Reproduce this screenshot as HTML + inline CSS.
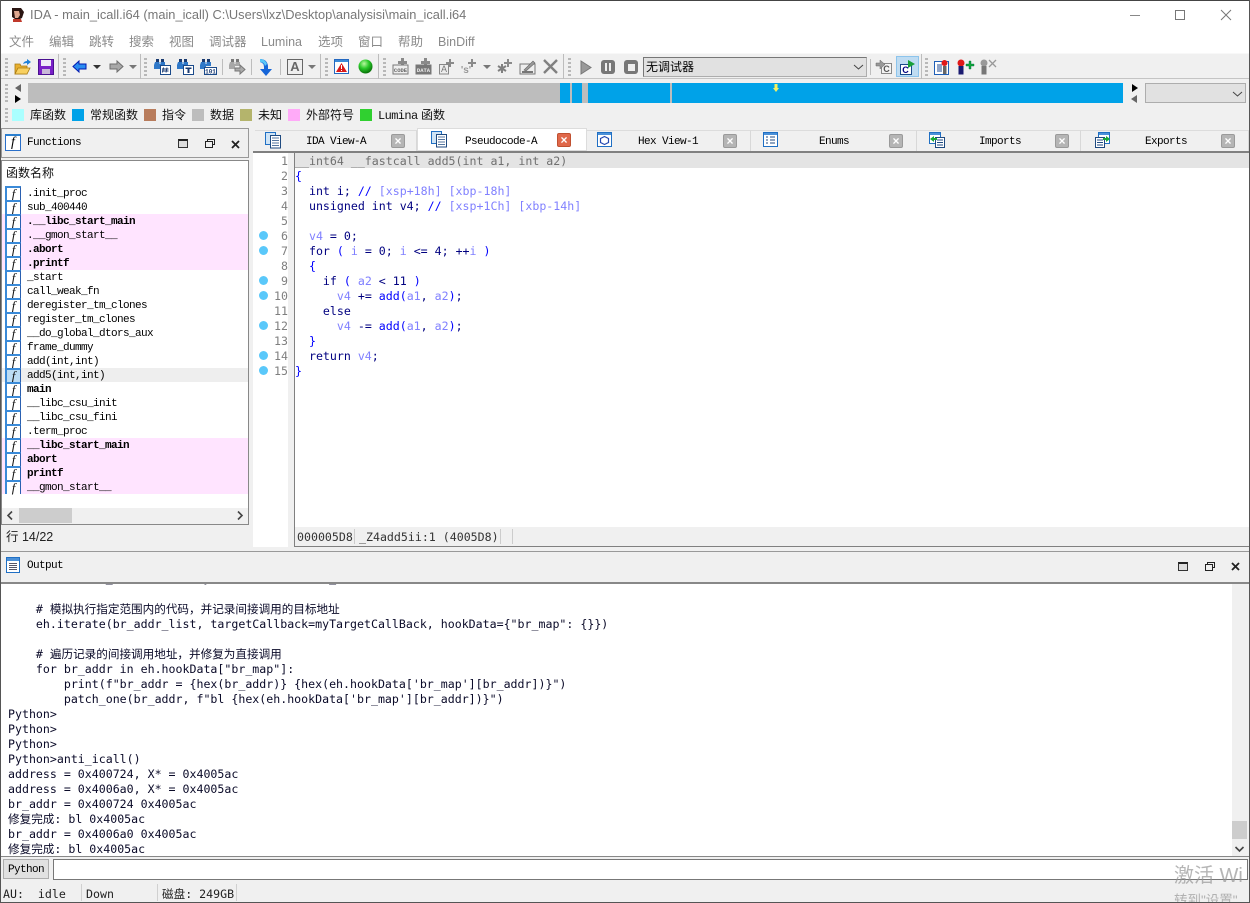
<!DOCTYPE html>
<html><head><meta charset="utf-8"><style>
html,body{margin:0;padding:0;width:1250px;height:903px;overflow:hidden;background:#f0f0f0}
*{box-sizing:border-box}
.a{position:absolute}
body{font-family:"Liberation Sans","Noto Sans CJK SC",sans-serif;font-size:12px;color:#000}
.t{position:absolute;white-space:pre;line-height:14px}
.m{color:#8a8a8a;font-size:12.500px;top:35px}
.s{font-family:"Liberation Mono","Noto Sans CJK SC",monospace;font-size:11px;letter-spacing:-.6px}
.fn{position:absolute;left:27px;font-family:"Liberation Mono",monospace;font-size:11px;letter-spacing:-.6px;white-space:pre;line-height:14px;height:14px}
.b{font-weight:bold}
.fi{position:absolute;left:5px;width:16px;height:14px;background:#fff;border-left:2px solid #3a8ad8;border-right:1px solid #2a5fb0;border-top:2px solid #3a8ad8;font:italic 13px/12px "Liberation Serif",serif;text-align:center;color:#111}
.ln{position:absolute;left:253px;width:35px;text-align:right;font-family:"DejaVu Sans Mono",monospace;font-size:11.6px;line-height:15px;color:#7f7f7f}
.dot{position:absolute;left:259px;width:9px;height:9px;border-radius:50%;background:#5ac8fa}
.c{position:absolute;left:295px;font-family:"DejaVu Sans Mono",monospace;font-size:11.6px;line-height:15px;white-space:pre;color:#000080}
.c i{font-style:normal;color:#8080ff}.c u{text-decoration:none;color:#0000ff}
.o{position:absolute;left:8px;font-family:"DejaVu Sans Mono","Noto Sans CJK SC",monospace;font-size:11.6px;line-height:15px;white-space:pre;color:#0a0a28}
.st{position:absolute;top:887px;font-family:"DejaVu Sans Mono","Noto Sans CJK SC",monospace;font-size:11.6px;line-height:14px;white-space:pre;color:#222}
.tab{position:absolute;top:130px;height:21px;background:#f0f0f0;border-right:1px solid #d8d8d8;border-top:1px solid #dcdcdc}
.tl{position:absolute;top:135px;font-family:"Liberation Mono",monospace;font-size:11px;letter-spacing:-.6px;line-height:14px;white-space:pre}
.x{position:absolute;top:134px;width:14px;height:14px;background:#b5b5b5;border:1px solid #9a9a9a;border-radius:2px;color:#fff;font:bold 12px/12px "Liberation Sans",sans-serif;text-align:center}
.grip{position:absolute;width:3px;top:58px;height:18px;background:repeating-linear-gradient(#b8b8b8 0 2px,transparent 2px 4px)}
.sep{position:absolute;top:54px;width:1px;height:25px;background:#bdbdbd}
.lg{position:absolute;top:109px;width:12px;height:12px}
.lt{position:absolute;top:108px;font-size:12px;line-height:14px;white-space:pre;color:#111}
svg{position:absolute;overflow:visible}
</style></head><body>

<!-- title & menu -->
<div class="a" style="left:0;top:0;width:1250px;height:53px;background:#fff"></div>
<div class="a" style="left:0;top:0;width:1250px;height:1px;background:#444"></div>
<div class="a" style="left:0;top:0;width:1px;height:903px;background:#555;z-index:9"></div>
<div class="a" style="left:1249px;top:0;width:1px;height:903px;background:#555;z-index:9"></div>
<div class="a" style="left:0;top:902px;width:1250px;height:1px;background:#555;z-index:9"></div>
<svg style="left:9px;top:7px" width="17" height="16" viewBox="0 0 17 16"><path d="M3 1h9l3 4-2 6-2 1 1 3H5l1-3-3-2z" fill="#2a1512"/><path d="M5 4h5l1 4-2 3H6z" fill="#e0a890"/><path d="M4 12h8l1 3H4z" fill="#c0392b"/></svg>
<div class="t" style="left:30px;top:8px;font-size:12.830px;color:#777">IDA - main_icall.i64 (main_icall) C:\Users\lxz\Desktop\analysisi\main_icall.i64</div>
<div class="a" style="left:1130px;top:15px;width:10px;height:1px;background:#888"></div>
<div class="a" style="left:1175px;top:10px;width:10px;height:10px;border:1px solid #777"></div>
<svg style="left:1221px;top:10px" width="10" height="10"><path d="M0 0L10 10M10 0L0 10" stroke="#777" fill="none"/></svg>
<div class="t m" style="left:9px">文件</div><div class="t m" style="left:49px">编辑</div><div class="t m" style="left:89px">跳转</div><div class="t m" style="left:129px">搜索</div><div class="t m" style="left:169px">视图</div><div class="t m" style="left:209px">调试器</div><div class="t m" style="left:261px">Lumina</div><div class="t m" style="left:318px">选项</div><div class="t m" style="left:358px">窗口</div><div class="t m" style="left:398px">帮助</div><div class="t m" style="left:438px">BinDiff</div>

<!-- toolbar -->
<div class="a" style="left:0;top:53px;width:1250px;height:26px;background:#f0f0f0;border-top:1px solid #f8f8f8;border-bottom:1px solid #c4c4c4"></div>
<div class="grip" style="left:5px"></div><div class="grip" style="left:63px"></div><div class="grip" style="left:144px"></div><div class="grip" style="left:325px"></div><div class="grip" style="left:383px"></div><div class="grip" style="left:568px"></div><div class="grip" style="left:925px"></div>
<div class="sep" style="left:58px"></div><div class="sep" style="left:140px"></div><div class="sep" style="left:320px"></div><div class="sep" style="left:378px"></div><div class="sep" style="left:563px"></div><div class="sep" style="left:921px"></div>
<!-- folder -->
<svg style="left:14px;top:59px" width="17" height="17" viewBox="0 0 17 17"><path d="M1 5h5l1 2h6v8H1z" fill="#e8b030" stroke="#a87a10" stroke-width=".8"/><path d="M1 15l3-6h12l-3 6z" fill="#f8d060" stroke="#a87a10" stroke-width=".8"/><path d="M9 5q1-3 4-3V0l4 3-4 3V4q-2 0-4 1z" fill="#1e80d8"/></svg>
<!-- save -->
<svg style="left:38px;top:59px" width="16" height="16" viewBox="0 0 16 16"><path d="M.5.5h15v15H.5z" fill="#7a1fc8" stroke="#4a1090"/><path d="M3 1h10v6H3z" fill="#f0e8f8"/><path d="M4 10h8v5H4z" fill="#c8b8d8"/></svg>
<!-- arrows -->
<svg style="left:73px;top:60px" width="14" height="13" viewBox="0 0 14 13"><path d="M0 6.500L6 1v3h7v5H6v3z" fill="#2a8cf0" stroke="#0018b0"/></svg>
<svg style="left:93px;top:65px" width="8" height="4"><path d="M0 0h8L4 4z" fill="#333"/></svg>
<svg style="left:109px;top:60px" width="14" height="13" viewBox="0 0 14 13"><path d="M14 6.500L8 1v3H1v5h7v3z" fill="#a8a8a8" stroke="#6e6e6e"/></svg>
<svg style="left:129px;top:65px" width="8" height="4"><path d="M0 0h8L4 4z" fill="#777"/></svg>
<!-- binoculars -->
<svg style="left:154px;top:59px" width="17" height="16" viewBox="0 0 17 16"><path d="M2 0h3v3H2zM7 0h3v3H7z" fill="#1a3a70"/><path d="M1 3h4.500v2h1V3H11v4H6v3H0V6z" fill="#2f78c8"/><rect x="6.500" y="6.500" width="10" height="9" fill="#fff" stroke="#1a4a8a"/><path d="M9.500 8.500l-1 5M13 8.500l-1 5M8 10h6.500M8 12h6.500" stroke="#1a3a70" stroke-width=".9" fill="none"/></svg>
<svg style="left:177px;top:59px" width="17" height="16" viewBox="0 0 17 16"><path d="M2 0h3v3H2zM7 0h3v3H7z" fill="#1a3a70"/><path d="M1 3h4.500v2h1V3H11v4H6v3H0V6z" fill="#2f78c8"/><rect x="6.500" y="6.500" width="10" height="9" fill="#fff" stroke="#1a4a8a"/><path d="M8.500 8.500h6v1.500h-2v4h-2v-4h-2z" fill="#1a3a70"/></svg>
<svg style="left:200px;top:59px" width="17" height="16" viewBox="0 0 17 16"><path d="M2 0h3v3H2zM7 0h3v3H7z" fill="#1a3a70"/><path d="M1 3h4.500v2h1V3H11v4H6v3H0V6z" fill="#2f78c8"/><rect x="4.500" y="8.500" width="12" height="7" fill="#fff" stroke="#1a4a8a"/><text x="10.500" y="14.300" font-size="6" font-weight="bold" text-anchor="middle" fill="#1a3a70" font-family="Liberation Mono">101</text></svg>
<div class="sep" style="left:222px;top:59px;height:16px"></div>
<svg style="left:229px;top:59px" width="17" height="16" viewBox="0 0 17 16"><path d="M2 0h3v3H2zM7 0h3v3H7z" fill="#777"/><path d="M1 3h4.500v2h1V3H11v4H6v3H0V6z" fill="#a8a8a8"/><path d="M6 9h5V6l5 4.500-5 4.500v-3H6z" fill="#aaa" stroke="#777"/></svg>
<div class="sep" style="left:251px;top:59px;height:16px"></div>
<svg style="left:259px;top:59px" width="14" height="17" viewBox="0 0 14 17"><path d="M1 0q7 0 8 7v3h4l-6 7-6-7h4V8Q5 4 1 3z" fill="#1565d8"/><path d="M1 0q5 0 7 5l-2 2Q5 3 1 3z" fill="#58c8f8"/></svg>
<div class="sep" style="left:280px;top:59px;height:16px"></div>
<div class="a" style="left:287px;top:59px;width:16px;height:16px;border:1px solid #666;background:#eee;text-align:center;font:bold 13px/14px 'Liberation Sans',sans-serif;color:#666">A</div>
<svg style="left:308px;top:65px" width="8" height="4"><path d="M0 0h8L4 4z" fill="#777"/></svg>
<!-- warning -->
<svg style="left:334px;top:59px" width="15" height="15" viewBox="0 0 15 15"><rect x=".5" y=".5" width="14" height="14" fill="#fff" stroke="#2468c0"/><rect x="1" y="1" width="13" height="2" fill="#3a8ad8"/><path d="M7.500 4L13 13H2z" fill="#d81818"/><path d="M7 6h1v4H7zM7 11h1v1H7z" fill="#fff"/></svg>
<svg style="left:358px;top:59px" width="15" height="15" viewBox="0 0 15 15"><defs><radialGradient id="g" cx=".4" cy=".3" r=".7"><stop offset="0" stop-color="#b8f8a0"/><stop offset=".5" stop-color="#28c828"/><stop offset="1" stop-color="#087008"/></radialGradient></defs><circle cx="7.500" cy="7.500" r="7" fill="url(#g)"/></svg>
<!-- add items -->
<svg style="left:392px;top:58px" width="17" height="17" viewBox="0 0 17 17"><path d="M9 0h3v3h3v3h-3v3H9V6H6V3h3z" fill="#8a8a8a"/><rect x="1" y="7" width="15" height="9" fill="#eee" stroke="#777"/><text x="8.500" y="14" font-size="5.500" font-weight="bold" text-anchor="middle" fill="#666" font-family="Liberation Mono">CODE</text></svg>
<svg style="left:415px;top:58px" width="17" height="17" viewBox="0 0 17 17"><path d="M9 0h3v3h3v3h-3v3H9V6H6V3h3z" fill="#8a8a8a"/><rect x="1" y="7" width="15" height="9" fill="#777" stroke="#777"/><text x="8.500" y="14" font-size="5.500" font-weight="bold" text-anchor="middle" fill="#eee" font-family="Liberation Mono">DATA</text></svg>
<svg style="left:438px;top:58px" width="17" height="17" viewBox="0 0 17 17"><path d="M11 1h2v3h3v2h-3v3h-2V6H8V4h3z" fill="#8a8a8a"/><rect x="1.500" y="6.500" width="9" height="9.500" fill="#eee" stroke="#888"/><text x="6" y="14" font-size="9" text-anchor="middle" fill="#777" font-family="Liberation Sans">A</text></svg>
<svg style="left:460px;top:58px" width="18" height="17" viewBox="0 0 18 17"><path d="M11 1h2v3h3v2h-3v3h-2V6H8V4h3z" fill="#8a8a8a"/><text x="6" y="15" font-size="10" font-weight="bold" text-anchor="middle" fill="#999" font-family="Liberation Sans">'s'</text></svg>
<svg style="left:483px;top:65px" width="8" height="4"><path d="M0 0h8L4 4z" fill="#777"/></svg>
<svg style="left:496px;top:58px" width="17" height="17" viewBox="0 0 17 17"><path d="M11 1h2v3h3v2h-3v3h-2V6H8V4h3z" fill="#8a8a8a"/><path d="M6 6v9M2 8l8 5M10 8l-8 5" stroke="#808080" stroke-width="2" fill="none"/></svg>
<svg style="left:519px;top:58px" width="17" height="17" viewBox="0 0 17 17"><rect x="1" y="6" width="15" height="10" fill="#eee" stroke="#777"/><path d="M3 13h11v2H3z" fill="#777"/><path d="M5 12l9-9 2 2-9 8z" fill="#999" stroke="#666" stroke-width=".6"/></svg>
<svg style="left:543px;top:59px" width="15" height="15"><path d="M1 1l13 13M14 1L1 14" stroke="#808080" stroke-width="2.400" fill="none"/></svg>
<svg style="left:580px;top:60px" width="12" height="15"><path d="M1 1l10 6.500L1 14z" fill="#999" stroke="#777"/></svg>
<div class="a" style="left:601px;top:60px;width:14px;height:14px;background:#777;border-radius:3px"></div><div class="a" style="left:605px;top:63px;width:2px;height:8px;background:#eee"></div><div class="a" style="left:609px;top:63px;width:2px;height:8px;background:#eee"></div>
<div class="a" style="left:624px;top:60px;width:14px;height:14px;background:#777;border-radius:3px"></div><div class="a" style="left:628px;top:64px;width:7px;height:7px;background:#eee"></div>
<div class="a" style="left:643px;top:57px;width:224px;height:20px;background:#e1e1e1;border:1px solid #adadad;border-left-color:#777;border-top-color:#777;font-size:12px;line-height:18px;padding-left:2px">无调试器</div>
<svg style="left:854px;top:65px" width="9" height="5"><path d="M0 0l4.500 4L9 0" stroke="#444" fill="none"/></svg>
<div class="sep" style="left:870px;top:59px;height:16px"></div>
<svg style="left:876px;top:59px" width="16" height="16" viewBox="0 0 16 16"><rect x="5.500" y="4.500" width="10" height="10" fill="#f4f4f4" stroke="#888"/><path d="M0 4h4V1l5 4.500L4 10V7H0z" fill="#999" stroke="#666" stroke-width=".5"/><text x="10.500" y="13" font-size="9" font-weight="bold" text-anchor="middle" fill="#555" font-family="Liberation Sans">C</text></svg>
<div class="a" style="left:896px;top:56px;width:23px;height:21px;background:#bfdcf2;border:1px solid #8cc4ec"></div>
<svg style="left:900px;top:59px" width="16" height="17" viewBox="0 0 16 17"><rect x=".5" y="5.500" width="11" height="10" fill="#fff" stroke="#1a4a8a"/><text x="5.500" y="14" font-size="9" font-weight="bold" text-anchor="middle" fill="#000080" font-family="Liberation Sans">C</text><path d="M8 1l7 4-7 4z" fill="#18a038"/></svg>
<svg style="left:934px;top:59px" width="17" height="16" viewBox="0 0 17 16"><rect x=".5" y="2.500" width="14" height="13" fill="#fff" stroke="#1f5fb8"/><path d="M3 6h5M3 8h5M3 10h5M3 12h5" stroke="#1f4a90"/><circle cx="10.500" cy="4" r="3" fill="#e01818"/><rect x="9" y="7" width="3.500" height="8" fill="#666"/></svg>
<svg style="left:957px;top:59px" width="17" height="16" viewBox="0 0 17 16"><circle cx="4" cy="4" r="3.500" fill="#e01818"/><rect x="1.500" y="7" width="5" height="8.500" fill="#1a1a70"/><path d="M9 5h3V2h2v3h3v2h-3v3h-2V7H9z" fill="#10a838" stroke="#064" stroke-width=".4"/></svg>
<svg style="left:980px;top:59px" width="17" height="16" viewBox="0 0 17 16"><circle cx="4" cy="4" r="3.500" fill="#999"/><rect x="1.500" y="7" width="5" height="8.500" fill="#777"/><path d="M9 1l7 7M16 1L9 8" stroke="#999" stroke-width="1.300"/></svg>

<!-- nav bar -->
<div class="grip" style="left:5px;top:84px;height:20px"></div>
<svg style="left:15px;top:84px" width="6" height="8"><path d="M6 0v8L0 4z" fill="#666"/></svg>
<svg style="left:15px;top:95px" width="6" height="8"><path d="M0 0v8l6-4z" fill="#000"/></svg>
<div class="a" style="left:28px;top:83px;width:1095px;height:20px;background:#bdbdbd"></div>
<div class="a" style="left:560px;top:83px;width:10px;height:20px;background:#00a2e8"></div>
<div class="a" style="left:572px;top:83px;width:10px;height:20px;background:#00a2e8"></div>
<div class="a" style="left:588px;top:83px;width:82px;height:20px;background:#00a2e8"></div>
<div class="a" style="left:672px;top:83px;width:451px;height:20px;background:#00a2e8"></div>
<svg style="left:773px;top:84px" width="6" height="8"><path d="M1.500 0h3v4H6L3 8 0 4h1.500z" fill="#f4f060"/></svg>
<svg style="left:1132px;top:84px" width="6" height="8"><path d="M0 0v8l6-4z" fill="#000"/></svg>
<svg style="left:1131px;top:95px" width="6" height="8"><path d="M6 0v8L0 4z" fill="#666"/></svg>
<div class="a" style="left:1145px;top:83px;width:101px;height:20px;background:#e1e1e1;border:1px solid #adadad"></div>
<svg style="left:1233px;top:92px" width="9" height="5"><path d="M0 0l4.500 4L9 0" stroke="#444" fill="none"/></svg>

<!-- legend -->
<div class="grip" style="left:5px;top:108px;height:14px"></div>
<div class="lg" style="left:12px;background:#aaffff"></div><div class="lt" style="left:30px">库函数</div>
<div class="lg" style="left:72px;background:#00a2e8"></div><div class="lt" style="left:90px">常规函数</div>
<div class="lg" style="left:144px;background:#b87c5c"></div><div class="lt" style="left:162px">指令</div>
<div class="lg" style="left:192px;background:#bdbdbd"></div><div class="lt" style="left:210px">数据</div>
<div class="lg" style="left:240px;background:#b4b46c"></div><div class="lt" style="left:258px">未知</div>
<div class="lg" style="left:288px;background:#ffaaf8"></div><div class="lt" style="left:306px">外部符号</div>
<div class="lg" style="left:360px;background:#30d030"></div><div class="lt s" style="left:378px;top:109px">Lumina</div><div class="lt" style="left:421px">函数</div>

<!-- functions panel -->
<div class="a" style="left:1px;top:128px;width:248px;height:30px;background:#f0f0f0;border:1px solid #999"></div>
<div class="a" style="left:5px;top:134px;width:16px;height:17px;background:#fff;border:1px solid #2a6fc9;border-top:2px solid #2a7fd0;font:italic 14px/14px 'Liberation Serif',serif;text-align:center">f</div>
<div class="t s" style="left:27px;top:136px">Functions</div>
<div class="a" style="left:178px;top:139px;width:10px;height:9px;border:1px solid #333;border-top:2px solid #222;background:#ddd"></div>
<svg style="left:205px;top:139px" width="10" height="9"><path d="M2.500 2.500V.5h7v5H7.500M.5 2.500h7v6h-7z" fill="none" stroke="#222"/></svg>
<svg style="left:231px;top:140px" width="9" height="9"><path d="M1 1l7 7M8 1L1 8" stroke="#222" stroke-width="1.800"/></svg>
<div class="a" style="left:1px;top:160px;width:248px;height:365px;background:#fff;border:1px solid #888;border-top-color:#888"></div>
<div class="t" style="left:6px;top:166px;font-size:12px;color:#111">函数名称</div>
<div class="a" style="left:2px;top:214px;width:246px;height:56px;background:#ffe4ff"></div>
<div class="a" style="left:2px;top:368px;width:246px;height:14px;background:#eeeeee"></div>
<div class="a" style="left:2px;top:438px;width:246px;height:56px;background:#ffe4ff"></div>

<div class="fi" style="top:186px">f</div><div class="fn" style="top:187px">.init_proc</div>
<div class="fi" style="top:200px">f</div><div class="fn" style="top:201px">sub_400440</div>
<div class="fi" style="top:214px">f</div><div class="fn b" style="top:215px">.__libc_start_main</div>
<div class="fi" style="top:228px">f</div><div class="fn" style="top:229px">.__gmon_start__</div>
<div class="fi" style="top:242px">f</div><div class="fn b" style="top:243px">.abort</div>
<div class="fi" style="top:256px">f</div><div class="fn b" style="top:257px">.printf</div>
<div class="fi" style="top:270px">f</div><div class="fn" style="top:271px">_start</div>
<div class="fi" style="top:284px">f</div><div class="fn" style="top:285px">call_weak_fn</div>
<div class="fi" style="top:298px">f</div><div class="fn" style="top:299px">deregister_tm_clones</div>
<div class="fi" style="top:312px">f</div><div class="fn" style="top:313px">register_tm_clones</div>
<div class="fi" style="top:326px">f</div><div class="fn" style="top:327px">__do_global_dtors_aux</div>
<div class="fi" style="top:340px">f</div><div class="fn" style="top:341px">frame_dummy</div>
<div class="fi" style="top:354px">f</div><div class="fn" style="top:355px">add(int,int)</div>
<div class="fi" style="top:368px;background:#bcdcf4">f</div><div class="fn" style="top:369px">add5(int,int)</div>
<div class="fi" style="top:382px">f</div><div class="fn b" style="top:383px">main</div>
<div class="fi" style="top:396px">f</div><div class="fn" style="top:397px">__libc_csu_init</div>
<div class="fi" style="top:410px">f</div><div class="fn" style="top:411px">__libc_csu_fini</div>
<div class="fi" style="top:424px">f</div><div class="fn" style="top:425px">.term_proc</div>
<div class="fi" style="top:438px">f</div><div class="fn b" style="top:439px">__libc_start_main</div>
<div class="fi" style="top:452px">f</div><div class="fn b" style="top:453px">abort</div>
<div class="fi" style="top:466px">f</div><div class="fn b" style="top:467px">printf</div>
<div class="fi" style="top:480px">f</div><div class="fn" style="top:481px">__gmon_start__</div>

<div class="a" style="left:2px;top:508px;width:246px;height:16px;background:#f0f0f0"></div>
<div class="a" style="left:19px;top:508px;width:53px;height:15px;background:#cdcdcd"></div>
<svg style="left:7px;top:511px" width="6" height="9"><path d="M5 .5L1 4.500 5 8.500" stroke="#444" stroke-width="1.600" fill="none"/></svg>
<svg style="left:237px;top:511px" width="6" height="9"><path d="M1 .5L5 4.500 1 8.500" stroke="#444" stroke-width="1.600" fill="none"/></svg>
<div class="t" style="left:6px;top:530px;font-size:12.500px;color:#222">行 14/22</div>

<!-- tabs -->
<div class="tab" style="left:255px;width:162px"></div>
<div class="tab" style="left:417px;width:170px;background:#fff;top:128px;height:23px;border:1px solid #dcdcdc"></div>
<div class="tab" style="left:587px;width:164px"></div>
<div class="tab" style="left:751px;width:166px"></div>
<div class="tab" style="left:917px;width:164px"></div>
<div class="tab" style="left:1081px;width:168px"></div>
<div class="a" style="left:253px;top:151px;width:997px;height:2px;background:#808080"></div>
<svg style="left:265px;top:132px" width="17" height="17" viewBox="0 0 17 17"><rect x=".5" y=".5" width="10" height="12" fill="#cfe4f6" stroke="#1f6fc4"/><rect x="5.500" y="3.500" width="10" height="12.500" fill="#fff" stroke="#1f4a80"/><path d="M7 6h7M7 8.500h7M7 11h7M7 13.500h7" stroke="#1f4a80" stroke-width=".8"/></svg>
<div class="tl" style="left:306px">IDA View-A</div><div class="x" style="left:391px">×</div>
<svg style="left:431px;top:131px" width="17" height="17" viewBox="0 0 17 17"><rect x=".5" y=".5" width="10" height="12" fill="#cfe4f6" stroke="#1f6fc4"/><rect x="5.500" y="3.500" width="10" height="12.500" fill="#fff" stroke="#1f4a80"/><path d="M7 6h7M7 8.500h7M7 11h7M7 13.500h7" stroke="#1f4a80" stroke-width=".8"/></svg>
<div class="tl" style="left:465px">Pseudocode-A</div><div class="x" style="left:557px;top:133px;background:#e0684a;border-color:#c05030">×</div>
<svg style="left:597px;top:132px" width="16" height="15" viewBox="0 0 16 15"><rect x=".5" y=".5" width="14" height="14" fill="#fff" stroke="#1f6fc4"/><rect x="1" y="1" width="13" height="2" fill="#4a90d8"/><path d="M7.500 4.500l4 2v4l-4 2-4-2v-4z" fill="none" stroke="#2448b0" stroke-width="1.200"/></svg>
<div class="tl" style="left:638px">Hex View-1</div><div class="x" style="left:723px">×</div>
<svg style="left:763px;top:132px" width="16" height="15" viewBox="0 0 16 15"><rect x=".5" y=".5" width="14" height="14" fill="#fff" stroke="#1f6fc4"/><rect x="1" y="1" width="13" height="2" fill="#4a90d8"/><path d="M3 5h2M7 5h5M3 8h2M7 8h5M3 11h2M7 11h5" stroke="#1f4a80"/></svg>
<div class="tl" style="left:819px">Enums</div><div class="x" style="left:889px">×</div>
<svg style="left:929px;top:132px" width="16" height="16" viewBox="0 0 16 16"><rect x=".5" y=".5" width="11" height="11" fill="#fff" stroke="#1f6fc4"/><rect x="1" y="1" width="10" height="2" fill="#4a90d8"/><rect x="6.500" y="5.500" width="9" height="10" fill="#fff" stroke="#1f4a80"/><path d="M8 8h6M8 10.500h6M8 13h6" stroke="#1f4a80"/><path d="M1 7l4-3v2h3v2H5v2z" fill="#18a838"/></svg>
<div class="tl" style="left:979px">Imports</div><div class="x" style="left:1055px">×</div>
<svg style="left:1095px;top:132px" width="16" height="16" viewBox="0 0 16 16"><rect x="3.500" y=".5" width="11" height="11" fill="#fff" stroke="#1f6fc4"/><rect x="4" y="1" width="10" height="2" fill="#4a90d8"/><rect x=".5" y="5.500" width="9" height="10" fill="#fff" stroke="#1f4a80"/><path d="M2 8h6M2 10.500h6M2 13h6" stroke="#1f4a80"/><path d="M15 7l-4-3v2H8v2h3v2z" fill="#18a838"/></svg>
<div class="tl" style="left:1145px">Exports</div><div class="x" style="left:1221px">×</div>

<!-- code -->
<div class="a" style="left:253px;top:153px;width:35px;height:394px;background:#fff"></div>
<div class="a" style="left:294px;top:153px;width:956px;height:394px;background:#fff;border:1px solid #808080;border-top:0"></div>
<div class="a" style="left:295px;top:153px;width:954px;height:15px;background:#e4e4e4"></div>
<div class="a" style="left:295px;top:527px;width:954px;height:19px;background:#f0f0f0"></div>
<div class="ln" style="top:154px">1</div><div class="ln" style="top:169px">2</div><div class="ln" style="top:184px">3</div><div class="ln" style="top:199px">4</div><div class="ln" style="top:214px">5</div><div class="ln" style="top:229px">6</div><div class="ln" style="top:244px">7</div><div class="ln" style="top:259px">8</div><div class="ln" style="top:274px">9</div><div class="ln" style="top:289px">10</div><div class="ln" style="top:304px">11</div><div class="ln" style="top:319px">12</div><div class="ln" style="top:334px">13</div><div class="ln" style="top:349px">14</div><div class="ln" style="top:364px">15</div>
<div class="dot" style="top:231px"></div><div class="dot" style="top:246px"></div><div class="dot" style="top:276px"></div><div class="dot" style="top:291px"></div><div class="dot" style="top:321px"></div><div class="dot" style="top:351px"></div><div class="dot" style="top:366px"></div>
<div class="c" style="top:154px;color:#707070">__int64 __fastcall add5(int a1, int a2)</div>
<div class="c" style="top:169px"><u>{</u></div>
<div class="c" style="top:184px">  int i; <u>//</u> <i>[xsp+18h] [xbp-18h]</i></div>
<div class="c" style="top:199px">  unsigned int v4; <u>//</u> <i>[xsp+1Ch] [xbp-14h]</i></div>
<div class="c" style="top:229px">  <i>v4</i> = 0;</div>
<div class="c" style="top:244px">  for <u>(</u> <i>i</i> = 0; <i>i</i> &lt;= 4; ++<i>i</i> <u>)</u></div>
<div class="c" style="top:259px">  <u>{</u></div>
<div class="c" style="top:274px">    if <u>(</u> <i>a2</i> &lt; 11 <u>)</u></div>
<div class="c" style="top:289px">      <i>v4</i> += <u>add(</u><i>a1</i>, <i>a2</i><u>)</u>;</div>
<div class="c" style="top:304px">    else</div>
<div class="c" style="top:319px">      <i>v4</i> -= <u>add(</u><i>a1</i>, <i>a2</i><u>)</u>;</div>
<div class="c" style="top:334px">  <u>}</u></div>
<div class="c" style="top:349px">  return <i>v4</i>;</div>
<div class="c" style="top:364px"><u>}</u></div>
<div class="t" style="left:297px;top:530px;font-family:'DejaVu Sans Mono',monospace;font-size:11.600px;color:#333">000005D8</div>
<div class="a" style="left:354px;top:529px;width:1px;height:15px;background:#ccc"></div>
<div class="t" style="left:359px;top:530px;font-family:'DejaVu Sans Mono',monospace;font-size:11.600px;color:#333">_Z4add5ii:1 (4005D8)</div>
<div class="a" style="left:500px;top:529px;width:1px;height:15px;background:#ccc"></div>
<div class="a" style="left:512px;top:529px;width:1px;height:15px;background:#ccc"></div>

<!-- output -->
<div class="a" style="left:1px;top:551px;width:1248px;height:1px;background:#999"></div>
<div class="a" style="left:1px;top:582px;width:1248px;height:2px;background:#888"></div>
<svg style="left:6px;top:557px" width="14" height="16" viewBox="0 0 14 16"><rect x=".5" y=".5" width="13" height="15" fill="#fff" stroke="#1f6fc4"/><rect x="1" y="1" width="12" height="3" fill="#4a90d8"/><path d="M3 6.500h8M3 8.500h8M3 10.500h8M3 12.500h8" stroke="#556"/></svg>
<div class="t s" style="left:27px;top:559px">Output</div>
<div class="a" style="left:1178px;top:562px;width:10px;height:9px;border:1px solid #333;border-top:2px solid #222;background:#ddd"></div>
<svg style="left:1205px;top:562px" width="10" height="9"><path d="M2.500 2.500V.5h7v5H7.500M.5 2.500h7v6h-7z" fill="none" stroke="#222"/></svg>
<svg style="left:1231px;top:562px" width="9" height="9"><path d="M1 1l7 7M8 1L1 8" stroke="#222" stroke-width="1.800"/></svg>

<div class="a" style="left:1px;top:584px;width:1248px;height:272px;background:#fff;overflow:hidden">
<div class="o" style="top:-13px;left:7px">              _            (y)                _</div>
<div class="o" style="top:18px;left:7px">    # 模拟执行指定范围内的代码，并记录间接调用的目标地址</div>
<div class="o" style="top:33px;left:7px">    eh.iterate(br_addr_list, targetCallback=myTargetCallBack, hookData={"br_map": {}})</div>
<div class="o" style="top:63px;left:7px">    # 遍历记录的间接调用地址，并修复为直接调用</div>
<div class="o" style="top:78px;left:7px">    for br_addr in eh.hookData["br_map"]:</div>
<div class="o" style="top:93px;left:7px">        print(f"br_addr = {hex(br_addr)} {hex(eh.hookData['br_map'][br_addr])}")</div>
<div class="o" style="top:108px;left:7px">        patch_one(br_addr, f"bl {hex(eh.hookData['br_map'][br_addr])}")</div>
<div class="o" style="top:123px;left:7px">Python&gt;</div>
<div class="o" style="top:138px;left:7px">Python&gt;</div>
<div class="o" style="top:153px;left:7px">Python&gt;</div>
<div class="o" style="top:168px;left:7px">Python&gt;anti_icall()</div>
<div class="o" style="top:183px;left:7px">address = 0x400724, X* = 0x4005ac</div>
<div class="o" style="top:198px;left:7px">address = 0x4006a0, X* = 0x4005ac</div>
<div class="o" style="top:213px;left:7px">br_addr = 0x400724 0x4005ac</div>
<div class="o" style="top:228px;left:7px">修复完成: bl 0x4005ac</div>
<div class="o" style="top:243px;left:7px">br_addr = 0x4006a0 0x4005ac</div>
<div class="o" style="top:258px;left:7px">修复完成: bl 0x4005ac</div>
</div>
<div class="a" style="left:1232px;top:584px;width:17px;height:272px;background:#f0f0f0"></div>
<div class="a" style="left:1232px;top:821px;width:15px;height:18px;background:#cdcdcd"></div>
<svg style="left:1235px;top:846px" width="9" height="6"><path d="M.5 1L4.500 5 8.500 1" stroke="#444" stroke-width="1.600" fill="none"/></svg>
<div class="a" style="left:1px;top:856px;width:1248px;height:1px;background:#888"></div>

<!-- python input -->
<div class="a" style="left:3px;top:859px;width:46px;height:20px;background:#e1e1e1;border:1px solid #adadad;font-family:'Liberation Mono',monospace;font-size:11px;letter-spacing:-.6px;line-height:21px;text-align:center">Python</div>
<div class="a" style="left:53px;top:859px;width:1195px;height:21px;background:#fff;border:1px solid #777"></div>

<!-- status -->
<div class="st" style="left:3px">AU:  idle</div>
<div class="a" style="left:81px;top:884px;width:1px;height:17px;background:#d0d0d0"></div>
<div class="st" style="left:86px">Down</div>
<div class="a" style="left:157px;top:884px;width:1px;height:17px;background:#d0d0d0"></div>
<div class="st" style="left:162px">磁盘: 249GB</div>
<div class="a" style="left:236px;top:884px;width:1px;height:17px;background:#d0d0d0"></div>

<!-- watermark -->
<div class="t" style="left:1174px;top:864px;font-size:20px;line-height:24px;color:rgba(150,150,150,.7);z-index:5">激活 Wi</div>
<div class="t" style="left:1174px;top:893px;font-size:13.500px;line-height:16px;color:rgba(150,150,150,.7);z-index:5;height:10px;overflow:hidden">转到"设置"</div>
</body></html>
